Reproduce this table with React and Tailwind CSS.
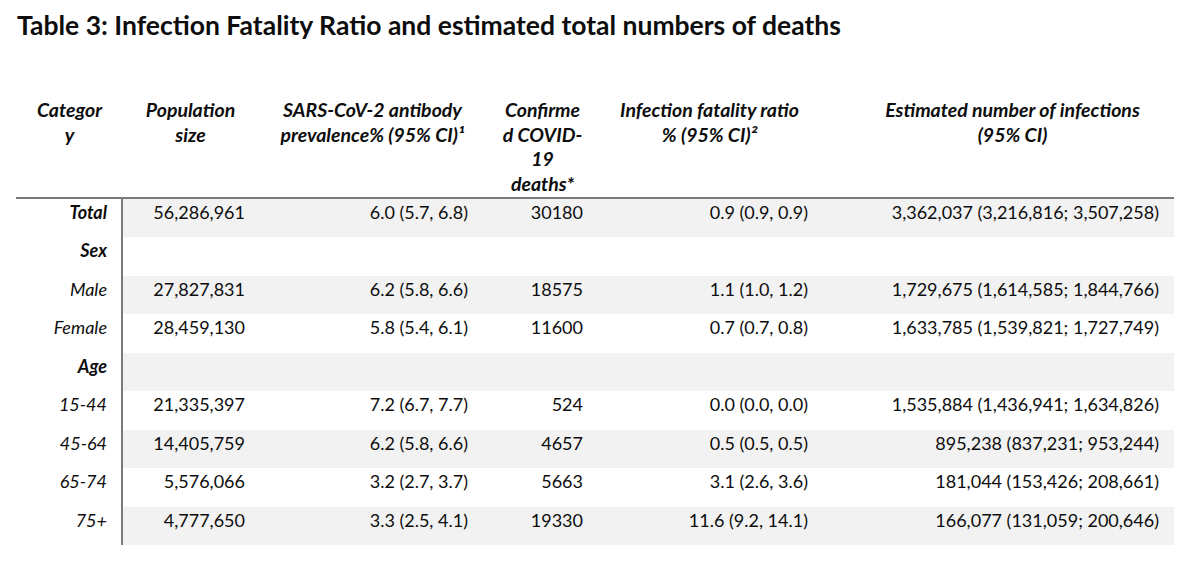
const rows = [
  { cat: "Total", bold: true, pop: "56,286,961", ab: "6.0 (5.7, 6.8)", deaths: "30180", ifr: "0.9 (0.9, 0.9)", est: "3,362,037 (3,216,816; 3,507,258)" },
  { cat: "Sex", bold: true },
  { cat: "Male", pop: "27,827,831", ab: "6.2 (5.8, 6.6)", deaths: "18575", ifr: "1.1 (1.0, 1.2)", est: "1,729,675 (1,614,585; 1,844,766)" },
  { cat: "Female", pop: "28,459,130", ab: "5.8 (5.4, 6.1)", deaths: "11600", ifr: "0.7 (0.7, 0.8)", est: "1,633,785 (1,539,821; 1,727,749)" },
  { cat: "Age", bold: true },
  { cat: "15-44", pop: "21,335,397", ab: "7.2 (6.7, 7.7)", deaths: "524", ifr: "0.0 (0.0, 0.0)", est: "1,535,884 (1,436,941; 1,634,826)" },
  { cat: "45-64", pop: "14,405,759", ab: "6.2 (5.8, 6.6)", deaths: "4657", ifr: "0.5 (0.5, 0.5)", est: "895,238 (837,231; 953,244)" },
  { cat: "65-74", pop: "5,576,066", ab: "3.2 (2.7, 3.7)", deaths: "5663", ifr: "3.1 (2.6, 3.6)", est: "181,044 (153,426; 208,661)" },
  { cat: "75+", pop: "4,777,650", ab: "3.3 (2.5, 4.1)", deaths: "19330", ifr: "11.6 (9.2, 14.1)", est: "166,077 (131,059; 200,646)" },
];

export default function App() {
  return (
    <div className="w-[1200px] h-[561px] bg-white text-[#0d0d0d] font-['Lato',sans-serif] overflow-hidden">
      <h1 className="pl-[17px] pt-[10px] text-[26.5px] leading-[30px] font-bold">
        Table 3: Infection Fatality Ratio and estimated total numbers of deaths
      </h1>

      <div className="ml-[16px] mt-[58px] w-[1158px]">
        {/* header */}
        <div className="flex h-[99px] text-[19.5px] leading-[24.5px] font-bold italic text-center">
          <div className="w-[107px]">Categor<br />y</div>
          <div className="w-[135px]">Population<br />size</div>
          <div className="w-[223px] pl-[6px]">SARS-CoV-2 antibody<br />prevalence% (95% CI)¹</div>
          <div className="w-[115px] pl-[8px]">Confirme<br />d COVID-<br />19<br />deaths*</div>
          <div className="w-[225px] pl-[2px]">Infection fatality ratio<br />% (95% CI)²</div>
          <div className="w-[353px] pl-[30px]">Estimated number of infections<br />(95% CI)</div>
        </div>

        <div className="border-t-2 border-[#7a7a7a]">
          {rows.map((r, i) => (
            <div key={r.cat} className="flex h-[38.45px] text-[18px] leading-[24px]">
              <div className={`w-[105px] pr-[14px] pt-[1px] text-right italic ${r.bold ? "font-bold" : ""}`}>
                {r.cat}
              </div>
              <div className={`flex flex-1 border-l-2 border-[#7a7a7a] pt-[1px] text-right ${i % 2 === 0 ? "bg-[#f2f2f2]" : "bg-white"}`}>
                <div className="w-[135px] pr-[13px]">{r.pop}</div>
                <div className="w-[223px] pr-[13px]">{r.ab}</div>
                <div className="w-[115px] pr-[13px]">{r.deaths}</div>
                <div className="w-[225px] pr-[13px]">{r.ifr}</div>
                <div className="w-[353px] pr-[15px]">{r.est}</div>
              </div>
            </div>
          ))}
        </div>
      </div>
    </div>
  );
}
